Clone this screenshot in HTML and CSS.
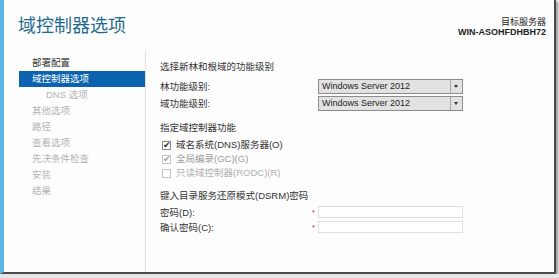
FILE: index.html
```html
<!DOCTYPE html>
<html lang="zh-CN">
<head>
  <meta charset="UTF-8">
  <title>域控制器选项</title>
  <link rel="stylesheet" href="styles.css">
</head>
<body>
  <div class="window">
    <!-- Header -->
    <div class="header">
      <h1>域控制器选项</h1>
      <div class="target">
        <div>目标服务器</div>
        <div class="server">WIN-ASOHFDHBH72</div>
      </div>
    </div>

    <div class="main">
      <!-- Wizard steps -->
      <ul class="steps">
        <li>部署配置</li>
        <li class="active">域控制器选项</li>
        <li class="sub disabled">DNS 选项</li>
        <li class="disabled">其他选项</li>
        <li class="disabled">路径</li>
        <li class="disabled">查看选项</li>
        <li class="disabled">先决条件检查</li>
        <li class="disabled">安装</li>
        <li class="disabled">结果</li>
      </ul>

      <!-- Page content -->
      <div class="content">
        <div class="section-title">选择新林和根域的功能级别</div>
        <div class="row">
          <span class="label">林功能级别:</span>
          <span class="req"></span>
          <div class="select"><span>Windows Server 2012</span><span class="arrow"></span></div>
        </div>
        <div class="row">
          <span class="label">域功能级别:</span>
          <span class="req"></span>
          <div class="select"><span>Windows Server 2012</span><span class="arrow"></span></div>
        </div>

        <div class="section-title gap">指定域控制器功能</div>
        <label class="check checked">域名系统(DNS)服务器(O)</label>
        <label class="check checked disabled">全局编录(GC)(G)</label>
        <label class="check disabled faint">只读域控制器(RODC)(R)</label>

        <div class="section-title gap2">键入目录服务还原模式(DSRM)密码</div>
        <div class="row pw">
          <span class="label">密码(D):</span>
          <span class="req">*</span>
          <div class="input"></div>
        </div>
        <div class="row pw">
          <span class="label">确认密码(C):</span>
          <span class="req">*</span>
          <div class="input"></div>
        </div>
      </div>
    </div>
  </div>
</body>
</html>
```

FILE: styles.css
```css
/* General */
body {
  margin: 0;
  background-color: #e6e6e6;
  font-family: 'Liberation Sans', 'Noto Sans CJK SC', sans-serif;
  font-size: 9.5px;
  color: #333;
}

.window {
  box-sizing: border-box;
  width: 556px;
  height: 274px;
  background-color: #fdfdfd;
  border-left: 4px solid #5ab8e2;
  border-right: 2px solid #4a4a4a;
  border-bottom: 2px solid #4a4a4a;
  box-shadow: 2px 2px 2px rgba(0, 0, 0, 0.3);
  display: flex;
  flex-direction: column;
}

/* Header */
.header {
  display: flex;
  justify-content: space-between;
  padding: 14px 8px 0 14px;
  height: 36px;
}

.header h1 {
  margin: 0;
  font-size: 18px;
  font-weight: normal;
  color: #1f6b8e;
  line-height: 24px;
}

.target {
  text-align: right;
  font-size: 9px;
  line-height: 10px;
  color: #222;
  padding-top: 3px;
}

.target .server {
  font-weight: bold;
}

/* Body */
.main {
  flex: 1;
  display: flex;
}

.steps {
  list-style: none;
  margin: 0;
  padding: 5px 0 0 15px;
  width: 126px;
  border-right: 1px solid #e2e2e2;
}

.steps li {
  line-height: 16px;
  padding-left: 13px;
  color: #333;
}

.steps li.active {
  background-color: #0b63b0;
  color: #fff;
}

.steps li.sub {
  padding-left: 27px;
}

.steps li.disabled {
  color: #b4b4b4;
}

.content {
  flex: 1;
  padding: 9px 0 0 14px;
}

.section-title {
  line-height: 16px;
  margin-bottom: 3px;
}

.section-title.gap {
  margin-top: 9px;
  margin-bottom: 2px;
}

.section-title.gap2 {
  margin-top: 8px;
  margin-bottom: 1px;
}

.row {
  display: flex;
  align-items: center;
  height: 16px;
  margin-bottom: 1px;
}

.row.pw {
  height: 14px;
}

.row .label {
  width: 152px;
}

.row .req {
  width: 6px;
  color: #e03030;
  font-size: 8px;
}

/* Dropdown */
.select {
  box-sizing: border-box;
  width: 145px;
  height: 15px;
  display: flex;
  border: 1px solid #8c8c8c;
  background-color: #e2e2e2;
  color: #222;
  font-size: 9px;
}

.select span:first-child {
  flex: 1;
  padding-left: 3px;
  line-height: 13px;
}

.select .arrow {
  width: 11px;
  border-left: 1px solid #a8a8a8;
  position: relative;
}

.select .arrow::after {
  content: '';
  position: absolute;
  left: 3px;
  top: 5px;
  border-left: 2.5px solid transparent;
  border-right: 2.5px solid transparent;
  border-top: 3px solid #333;
}

/* Password inputs */
.input {
  box-sizing: border-box;
  width: 145px;
  height: 12px;
  border: 1px solid #dedede;
  background-color: #fff;
}

/* Checkboxes */
.check {
  display: flex;
  align-items: center;
  line-height: 14px;
  padding-left: 2px;
  color: #333;
}

.check::before {
  content: '';
  box-sizing: border-box;
  width: 9px;
  height: 9px;
  margin-right: 5px;
  border: 1px solid #8a8a8a;
  background-color: #fff;
  font-size: 9px;
  line-height: 7px;
  text-align: center;
}

.check.checked::before {
  content: '\2714';
  color: #333;
}

.check.disabled {
  color: #9a9a9a;
}

.check.disabled::before {
  border-color: #c4c4c4;
  color: #a0a0a0;
}

.check.faint {
  color: #b0b0b0;
}
```
